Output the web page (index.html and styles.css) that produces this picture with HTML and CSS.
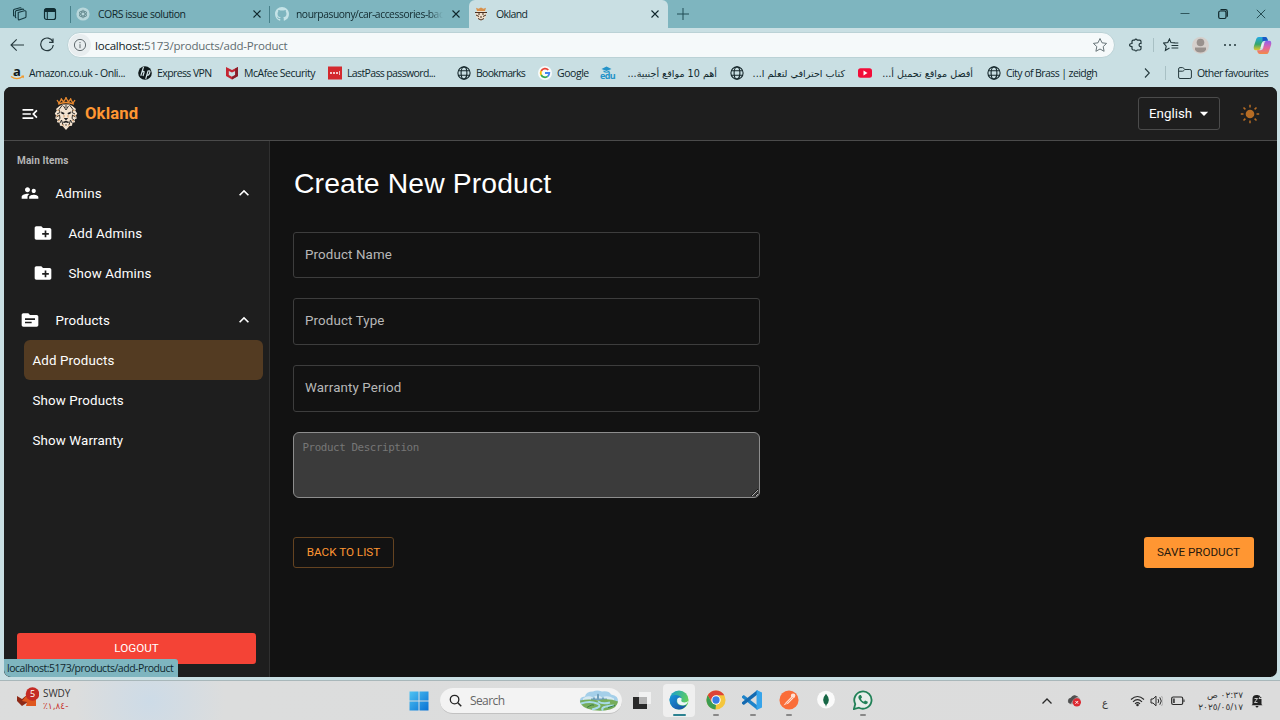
FILE: index.html
```html
<!DOCTYPE html>
<html lang="en">
<head>
<meta charset="utf-8">
<title>Okland</title>
<link rel="stylesheet" href="styles.css">
</head>
<body>
<svg class="defs" width="0" height="0">
  <symbol id="close" viewBox="0 0 10 10"><path d="M1.500 1.500l7 7M8.500 1.500l-7 7" fill="none" stroke="currentColor" stroke-width="1.100"/></symbol>
  <symbol id="globe" viewBox="0 0 14 14"><g fill="none" stroke="#17292d" stroke-width="1.100"><circle cx="7" cy="7" r="6.100"/><ellipse cx="7" cy="7" rx="2.900" ry="6.100"/><path d="M1.500 4.800h11M1.500 9.200h11"/></g></symbol>
  <symbol id="folderplus" viewBox="0 0 24 24"><path fill="#fff" d="M20 6h-8l-2-2H4c-1.100 0-2 .9-2 2v12c0 1.100.9 2 2 2h16c1.100 0 2-.9 2-2V8c0-1.100-.9-2-2-2zm-1 8h-3v3h-2v-3h-3v-2h3V9h2v3h3v2z"/></symbol>
  <symbol id="less" viewBox="0 0 24 24"><path fill="#fff" d="M12 8l-6 6 1.410 1.410L12 10.830l4.590 4.580L18 14z"/></symbol>
  <symbol id="lion" viewBox="0 0 26 34">
    <g fill="none" stroke="#e8892f" stroke-width="1.300"><path d="M5 7.200Q13 3.800 21 7.200M4 3l2 3 2.500-3.800L10.500 5 13 1l2.500 4 2-2.800L20 6l2-3"/></g>
    <g fill="#e8892f"><circle cx="13" cy="1.200" r="1"/><circle cx="8.300" cy="2" r=".8"/><circle cx="17.700" cy="2" r=".8"/></g>
    <path fill="#f3e3d0" d="M6.500 9l3-1.500h7l3 1.500 3.500 3-.8 1.500 2 3-1.200 2 .8 3-2 .7.200 3-2.500.5-.5 3-2.500.3L13 33l-3.500-4-2.500-.3-.5-3-2.500-.5.2-3-2-.7.800-3-1.200-2 2-3L3 12z"/>
    <g fill="none" stroke="#1e1e1e" stroke-width=".9"><path d="M9.500 8L6 12.500l1 3-3 1.500M16.500 8l3.500 4.500-1 3 3 1.500M3.500 20l3-2 .5 3.500-2.500 2M22.500 20l-3-2-.5 3.500 2.500 2M7 26l1.500-3L10 28M19 26l-1.500-3L16 28M10.500 9l2.500 4 2.500-4M13 8v3"/></g>
    <g fill="#1e1e1e"><path d="M8 14.500l3.500 1.500-.5 1.500-2.500-.8zM18 14.500L14.500 16l.5 1.500 2.500-.8zM10.800 21h4.400L13 23.500zM9.500 25l3.500-1.200 3.500 1.200-1.500 1-2-.5-2 .5zM12 27.500h2L13 29z"/></g>
    <g fill="none" stroke="#c98242" stroke-width=".7"><path d="M4 13l2.500 1M22 13l-2.500 1M3 18.500L6 19M23 18.500L20 19M5 24l2-1M21 24l-2-1M11 18v2.500M15 18v2.500M9 27l2 2.500M17 27l-2 2.500"/></g>
  </symbol>
</svg>

<div class="tabs">
  <div class="tools">
    <svg class="i14" viewBox="0 0 14 14" fill="none" stroke="#163940" stroke-width="1.100"><path d="M5.200 5.500l6.200-1.700q1.600-.3 1.600 1v4.700q0 1-1 1.300L6.500 12.800q-1.300.3-1.300-1zM3.400 10.800q-1 .1-1-1V5q0-1 1-1.400l6.200-1.500q1-.1 1.200.8M1.600 9q-1.100 0-1.100-1V3.500q0-1 1-1.300L7 .8q1-.2 1.200.6"/></svg>
    <svg class="i14" viewBox="0 0 14 14"><rect x="1.500" y="1.500" width="11" height="11" rx="2" fill="none" stroke="#102c32" stroke-width="1.200"/><path d="M1.500 3q0-1.500 1.500-1.500h8q1.500 0 1.500 1.500v2h-11z" fill="#102c32"/><path d="M4.300 5v7.500" stroke="#102c32"/></svg>
  </div>
  <div class="tab t1">
    <svg class="i14" viewBox="0 0 14 14"><circle cx="7" cy="7" r="6.600" fill="#b8d7db"/><g fill="none" stroke="#668b91" stroke-width=".8"><ellipse cx="7" cy="7" rx="1.900" ry="4"/><ellipse cx="7" cy="7" rx="1.900" ry="4" transform="rotate(60 7 7)"/><ellipse cx="7" cy="7" rx="1.900" ry="4" transform="rotate(120 7 7)"/></g></svg>
    <span class="name n1">CORS issue solution</span>
    <svg class="x"><use href="#close"/></svg>
  </div>
  <div class="tab t2">
    <svg class="i14" viewBox="0 0 16 16"><path fill="#c5e3e7" d="M8 0C3.580 0 0 3.580 0 8c0 3.540 2.290 6.530 5.470 7.590.4.070.55-.17.55-.38 0-.19-.01-.82-.01-1.490-2.010.37-2.530-.49-2.690-.94-.09-.23-.48-.94-.82-1.130-.28-.15-.68-.52-.01-.53.63-.01 1.080.58 1.230.82.72 1.210 1.870.87 2.330.66.070-.52.280-.87.510-1.070-1.780-.2-3.640-.89-3.640-3.950 0-.87.310-1.590.82-2.150-.08-.2-.36-1.020.08-2.120 0 0 .67-.21 2.200.82A7.600 7.600 0 018 3.860c.68 0 1.360.09 2 .27 1.530-1.040 2.200-.82 2.200-.82.440 1.100.16 1.920.08 2.120.51.560.82 1.270.82 2.150 0 3.070-1.870 3.750-3.650 3.950.29.250.54.730.54 1.480v2.200c0 .21.150.46.550.38A8 8 0 0016 8c0-4.420-3.580-8-8-8z"/></svg>
    <span class="name n2">nourpasuony/car-accessories-bac</span>
    <svg class="x"><use href="#close"/></svg>
  </div>
  <div class="tab t3">
    <svg class="i14" viewBox="0 0 14 14"><path fill="#d99049" d="M2 .8l2.500 1L7 .5l2.500 1.300 2.500-1L11 4H3z"/><path fill="#efe0cc" d="M3 4h8l1.500 2-1 5L7 13.500 2.500 11l-1-5z"/><path fill="none" stroke="#4a3021" d="M1 5.500h12M2 8l3 1.500M12 8L9 9.500M4 7h2M8 7h2M6 10h2M4 11.500l3 1.500 3-1.500"/></svg>
    <span class="name n3">Okland</span>
    <svg class="x"><use href="#close"/></svg>
  </div>
  <svg class="plus" viewBox="0 0 14 14"><path d="M7 1v12M1 7h12" stroke="#214d55" stroke-width="1"/></svg>
  <div class="win">
    <svg viewBox="0 0 12 12"><path d="M1.500 5.500h9" stroke="#30565c"/></svg>
    <svg viewBox="0 0 12 12" fill="none" stroke="#10272b" stroke-width="1.200"><rect x="1.700" y="3" width="7.300" height="7.500" rx="1.500"/><path d="M3.500 1.700h5q1.800 0 1.800 1.800v5.200"/></svg>
    <svg viewBox="0 0 12 12"><path d="M1.800 1.800l8.400 8.400M10.200 1.800l-8.400 8.400" stroke="#1c3f46" stroke-width=".9"/></svg>
  </div>
</div>

<div class="toolbar">
  <svg class="i16" viewBox="0 0 16 16"><path d="M15 8H2M7.700 2.300L2 8l5.700 5.700" fill="none" stroke="#26383d" stroke-width="1.100"/></svg>
  <svg class="i16" viewBox="0 0 16 16"><path d="M13.800 4.800A6.300 6.300 0 1 0 14.300 8M14 1.500v3.800h-3.900" fill="none" stroke="#26383d" stroke-width="1.200"/></svg>
  <div class="address">
    <span class="info"><svg viewBox="0 0 14 14" fill="none" stroke="#626c70"><circle cx="7" cy="7" r="5.600"/><path d="M7 6.200v4M7 4v1.200"/></svg></span>
    <span class="url"><b>localhost:</b>5173/products/add-Product</span>
    <svg class="star" viewBox="0 0 16 16"><path d="M8 1.500l2 4.300 4.600.6-3.400 3.200.9 4.700L8 12l-4.100 2.300.9-4.700L1.400 6.400 6 5.800z" fill="none" stroke="#687579" stroke-linejoin="round"/></svg>
  </div>
  <svg class="ext" viewBox="0 0 14 14"><path d="M3 3.500q0-1.300 1.300-1.300h1.300q1.200-2.200 2.700 0h2.300q1.400 0 1.400 1.300v2q-1.900-.3-1.900 1.500t1.900 1.500v2q0 1.500-1.400 1.500H8.300q-1.300 2-2.700 0H4.300Q3 12 3 10.500V8.700Q.6 8.500.6 7T3 5.500z" fill="none" stroke="#21363a" stroke-width="1.200"/></svg>
  <i class="vr"></i>
  <svg class="fav" viewBox="0 0 16 14"><path d="M6.500 10l-4.100 2.500.8-4.400L.5 5.100l4.300-.5L6.500 1 8 4.600l4 .3M8.500 7.500h6.800M8.500 10h6.800M10 5h5.300" fill="none" stroke="#21363a" stroke-width="1.100"/></svg>
  <svg class="avatar" viewBox="0 0 17 17"><circle cx="8.500" cy="8.500" r="8.500" fill="#d5cfcb"/><circle cx="8.500" cy="5.500" r="3.800" fill="#99918d"/><path d="M3 10.500h11v2q-1 3-5.500 3T3 12.500z" fill="#99918d"/></svg>
  <svg class="dots" viewBox="0 0 14 6"><g fill="#21363a"><circle cx="2" cy="3" r="1"/><circle cx="7" cy="3" r="1"/><circle cx="12" cy="3" r="1"/></g></svg>
  <svg class="copilot" viewBox="0 0 20 20">
    <defs><linearGradient id="c1" x2="0" y2="1"><stop stop-color="#22a9e8"/><stop offset=".55" stop-color="#35a66a"/><stop offset="1" stop-color="#e7c72c"/></linearGradient><linearGradient id="c2" x2="0" y2="1"><stop stop-color="#8d62ee"/><stop offset=".5" stop-color="#df65a7"/><stop offset="1" stop-color="#f48b45"/></linearGradient></defs>
    <path d="M6 1h7q2 0 2.700 4H12q-2 0-2.700 2.500L8 13q-.7 2-2.500 2H3q-3 0-2-4.500L3.500 3Q4.200 1 6 1z" fill="url(#c1)"/><path d="M10 1h3q2 0 2.700 4H12q-1 0-2 1z" fill="#1858c7"/>
    <path d="M14.500 5H17q3 0 2 4.500L16.500 17q-.7 2-2.500 2H7q-2 0-2.700-4H8q2 0 2.700-2.500L12 7q.7-2 2.500-2z" fill="url(#c2)"/><path d="M9.500 7h2.300l-2 6H7.800z" fill="#e5eef2"/>
  </svg>
</div>

<div class="bookmarks">
  <div><svg viewBox="0 0 14 14"><path d="M1 10.500q6 4.500 12-.2M11.500 10h2l-.5 2" stroke="#f1992c" fill="none" stroke-width="1.200"/></svg><em class="a">a</em><span class="k1">Amazon.co.uk - Onli...</span></div>
  <div><svg viewBox="0 0 14 14"><circle cx="7" cy="7" r="6.800" fill="#10191b"/><path d="M5.500 1L2.800 9.800M4 6q2.500-1.500 2 .5l-1 3.500M7.700 12.800L10 5q2.500-.8 1.800 1.500Q11 9.600 8.800 9" fill="none" stroke="#d5e6e9" stroke-width="1.200"/></svg><span class="k2">Express VPN</span></div>
  <div><svg viewBox="0 0 14 14"><path d="M1 1l6 3 6-3v9l-6 3.500L1 10z" fill="#c52632"/><path d="M3.800 5L7 6.500 10.200 5v4L7 10.800 3.800 9z" fill="#c9dfe3"/><path d="M10.200 2.400L13 1v9l-6 3.500v-2.700L10.200 9z" fill="#881f2a"/></svg><span class="k3">McAfee Security</span></div>
  <div><svg viewBox="0 0 14 14"><path fill="#d3292e" d="M0 .5h14v13H0z"/><g fill="#fff"><circle cx="3" cy="7" r="1"/><circle cx="6" cy="7" r="1"/><circle cx="9" cy="7" r="1"/><path d="M11 5h.7v4H11z"/></g></svg><span class="k4">LastPass password...</span></div>
  <div><svg><use href="#globe"/></svg><span class="k5">Bookmarks</span></div>
  <div><svg viewBox="0 0 14 14"><circle cx="7" cy="7" r="7" fill="#f8fbfb"/><g fill="none" stroke-width="1.800"><path d="M10.300 4A4.300 4.300 0 0 0 3.200 5" stroke="#e94335"/><path d="M3.200 5a4.300 4.300 0 0 0 0 4.100" stroke="#fbbc05"/><path d="M3.200 9a4.300 4.300 0 0 0 6.500 1.400" stroke="#34a853"/><path d="M7 7h4.300q0 2-1.600 3.400" stroke="#4285f4"/></g></svg><span class="k6">Google</span></div>
  <div><em class="edu">edu</em><svg viewBox="0 0 14 14"><path fill="#2493c8" d="M1.500 3L6.500.5l5 2.500-5 2zM3.500 4.500l3 1.300 3-1.300V6q-3 1.500-6 0z"/></svg><span class="ar" dir="rtl">أهم 10 مواقع أجنبية...</span></div>
  <div><svg><use href="#globe"/></svg><span class="ar r2" dir="rtl">كتاب احترافي لتعلم ا...</span></div>
  <div><svg viewBox="0 0 14 14"><rect y="2.200" width="14" height="9.600" rx="2.500" fill="#f20d39"/><path d="M5.500 4.600v4.800L9.500 7z" fill="#fff"/></svg><span class="ar r2" dir="rtl">أفضل مواقع تحميل أ...</span></div>
  <div><svg><use href="#globe"/></svg><span class="k7">City of Brass | zeidgh</span></div>
  <div><svg class="more" viewBox="0 0 8 12"><path d="M2 1.500L6.300 6 2 10.500" fill="none" stroke="#263a3e" stroke-width="1.100"/></svg><i class="vr"></i></div>
  <div><svg viewBox="0 0 14 14"><path d="M.6 3q0-1.400 1.400-1.400h2.500q.7 0 1.200.6L6.800 3.500h5q1.600 0 1.600 1.500v6q0 1.500-1.500 1.500H2Q.6 12.500.6 11zM.6 5.200h3.900q.8 0 1.300-.6l1-1.100" fill="none" stroke="#25393d"/></svg><span class="k8">Other favourites</span></div>
</div>

<main class="page">
  <header>
    <svg class="menu" viewBox="0 0 24 24"><path fill="#fff" d="M3 18h13v-2H3v2zM3 13h10v-2H3v2zm0-7v2h13V6H3zm18 9.590L17.420 12 21 8.410 19.590 7l-5 5 5 5L21 15.590z"/></svg>
    <svg class="lion"><use href="#lion"/></svg>
    <strong>Okland</strong>
    <button class="lang">English<svg viewBox="0 0 10 6"><path fill="#fff" d="M.8.800h8.400L5 5z"/></svg></button>
    <svg class="sun" viewBox="0 0 20 20"><circle cx="10" cy="10" r="4.300" fill="#b66c24"/><g stroke="#b66c24" stroke-width="1.500"><path d="M10 .8v2.700M10 16.500v2.700M.8 10h2.700M16.500 10h2.700M3.500 3.500l1.900 1.900M14.600 14.600l1.900 1.900M3.500 16.500l1.900-1.900M14.600 5.400l1.900-1.900"/></g></svg>
  </header>
  <div class="body">
    <aside>
      <h2>Main Items</h2>
      <div class="row"><svg viewBox="0 0 24 24"><path fill="#fff" d="M16.500 12c1.380 0 2.490-1.120 2.490-2.500S17.880 7 16.500 7 14 8.120 14 9.500s1.120 2.500 2.500 2.500zM9 11c1.660 0 2.990-1.340 2.990-3S10.660 5 9 5 6 6.340 6 8s1.340 3 3 3zm7.500 3c-1.830 0-5.500.92-5.500 2.750V19h11v-2.250c0-1.830-3.670-2.750-5.500-2.750zM9 13c-2.330 0-7 1.170-7 3.500V19h7v-2.250c0-.85.33-2.340 2.370-3.470C10.500 13.100 9.660 13 9 13z"/></svg><span>Admins</span><svg class="less"><use href="#less"/></svg></div>
      <div class="row sub"><svg><use href="#folderplus"/></svg><span>Add Admins</span></div>
      <div class="row sub"><svg><use href="#folderplus"/></svg><span>Show Admins</span></div>
      <div class="row products"><svg viewBox="0 0 24 24"><path fill="#fff" d="M20 6h-8l-2-2H4c-1.100 0-1.990.9-1.990 2L2 18c0 1.100.9 2 2 2h16c1.100 0 2-.9 2-2V8c0-1.100-.9-2-2-2zm-6 10H6v-2h8v2zm4-4H6v-2h12v2z"/></svg><span>Products</span><svg class="less"><use href="#less"/></svg></div>
      <div class="link active">Add Products</div>
      <div class="link">Show Products</div>
      <div class="link">Show Warranty</div>
      <button class="logout">LOGOUT</button>
    </aside>
    <section>
      <h1>Create New Product</h1>
      <div class="form">
        <div class="field">Product Name</div>
        <div class="field">Product Type</div>
        <div class="field">Warranty Period</div>
        <textarea placeholder="Product Description"></textarea>
      </div>
      <div class="actions"><button class="back">BACK TO LIST</button><button class="save">SAVE PRODUCT</button></div>
    </section>
  </div>
  <div class="status">localhost:5173/products/add-Product</div>
</main>

<footer class="taskbar">
  <div class="stock">
    <svg viewBox="0 0 22 22"><path d="M0 9l5 3 6-5v8l-6 4-5-5z" fill="#8e2a17"/><path d="M9 9h10v10H9l1-4-5-1z" fill="#df571f"/><circle cx="15.500" cy="7" r="6.800" fill="#c42b25"/><text x="15.500" y="10.300" class="five">5</text></svg>
    <div><p>SWDY</p><p class="red">٪١,٨٤-</p></div>
  </div>
  <svg class="start" viewBox="0 0 20 20"><defs><linearGradient id="w" x2="1" y2="1"><stop stop-color="#4fc3f2"/><stop offset="1" stop-color="#0871d4"/></linearGradient></defs><path fill="url(#w)" d="M.5.500h9v9h-9zM10.500.500h9v9h-9zM.5 10.500h9v9h-9zM10.500 10.500h9v9h-9z"/></svg>
  <div class="search">
    <svg class="lens" viewBox="0 0 14 14"><circle cx="6" cy="6" r="4.600" fill="none" stroke="#252525" stroke-width="1.400"/><path d="M9.500 9.500l3.700 3.700" stroke="#252525" stroke-width="1.600"/></svg>
    <span>Search</span>
    <svg class="scene" viewBox="0 0 40 22"><path fill="#a4cfe9" d="M1 13Q0 7 6 7q1-5 8-5 4-2 9 0 7-1 9 3 8 1 7 8z"/><path fill="#d5e8f2" d="M4 9q5-4 10-1 5-4 9 0 5-3 12 1v3H4z"/><path fill="#6f9fbb" d="M12 11V9h2V8h2v1h2V5l1-1 1 1v4h3V8h2v1h3v2z"/><path fill="#76ad5b" d="M1 11q10-2 18 0 10-3 20 1-1 6-8 8-12 3-23-1-7-3-7-8z"/><path fill="none" stroke="#a8dbe8" stroke-width="2" d="M2 14q9-3 16 0t-5 6M19 12q5 3 12 1M24 21q-4-4 11-5"/><path fill="none" stroke="#397e43" d="M8 18q6-4 7-2M29 18l7-2"/></svg>
  </div>
  <svg class="taskview" viewBox="0 0 20 20"><path fill="#f1f1f1" d="M7 1h12v12H7z"/><path fill="#292929" d="M1 6h14v12H1z"/><path fill="#b5b5b5" d="M7 6h8v7H7z"/></svg>
  <div class="apps">
    <div class="app on"><svg viewBox="0 0 22 22"><defs><linearGradient id="e" x2="1" y2=".4"><stop stop-color="#139ad5"/><stop offset="1" stop-color="#62d05c"/></linearGradient><linearGradient id="e2" x2="1" y2="1"><stop stop-color="#1796dc"/><stop offset="1" stop-color="#174b9b"/></linearGradient></defs><circle cx="11" cy="11" r="10.500" fill="url(#e)"/><path d="M.6 10Q2 5 8 5.500q5 .5 6 4-3-2-5 .5-2 4 2 6.500 4 2 8.500-.5-3 5.500-8.500 5.500Q1 21 .6 10z" fill="url(#e2)"/><path d="M9 10q2-3 5-.7l-.5 2.200q0 2 3.500 2.200 3 0 4.300-2-1.300 4.200-4.800 5Q10 17.300 9 13z" fill="#eef5f7"/></svg><i></i></div>
    <div class="app"><svg viewBox="0 0 22 22"><circle cx="11" cy="11" r="10.500" fill="#f5c63c"/><path d="M1.900 5.700a10.500 10.500 0 0 1 18.200 0H11L6.500 13.600z" fill="#dd4338"/><path d="M1.900 5.700l4.600 8L11 16.300l-.6 5.200A10.500 10.500 0 0 1 1.900 5.700z" fill="#3b9c52"/><circle cx="11" cy="11" r="5.200" fill="#fff"/><circle cx="11" cy="11" r="4" fill="#377de5"/></svg><i></i></div>
    <div class="app"><svg viewBox="0 0 22 22"><path fill="#1e84ca" d="M0 7l2-1.500L17 17v5L0 8.500z"/><path fill="#146ab1" d="M0 15l2 1.500L17 5V0L0 13.500z"/><path fill="#36a4ea" d="M16 0l6 2.800v16.400L16 22z"/></svg><i></i></div>
    <div class="app"><svg viewBox="0 0 22 22"><circle cx="11" cy="11" r="10.500" fill="#fa6d39"/><path d="M5 17l2-3 7-7 2 2-6 6-3 1z" fill="#ffe1d5"/><circle cx="15.500" cy="6.300" r="2.500" fill="#ffe1d5"/><path d="M7 14l1 1 7-7" stroke="#fa6d39" stroke-width=".7" fill="none"/></svg><i></i></div>
    <div class="app"><svg viewBox="0 0 22 22"><circle cx="11" cy="10.500" r="9.800" fill="#fafafa"/><path d="M11 4q6 7 .4 12.500V18h-.8v-1.500Q5 11 11 4z" fill="#176746"/></svg></div>
    <div class="app"><svg viewBox="0 0 22 22"><path d="M1 21l1.500-5.500A9.500 9.500 0 1 1 6.500 19.500z" fill="#e7eeea" stroke="#218157" stroke-width="2"/><path d="M7.500 5.500q-3.500 2 .5 6.500 5 5.500 8 2.500l.3-1.500-3-1.500-1.300 1.500Q9.500 12 8.700 9.500L10 8 8.700 5.500z" fill="#218157"/></svg><i></i></div>
  </div>
  <div class="tray">
    <svg class="up" viewBox="0 0 12 8"><path d="M1.500 6.500L6 2l4.500 4.500" fill="none" stroke="#292929" stroke-width="1.300"/></svg>
    <svg class="cloud" viewBox="0 0 16 14"><path d="M1 9Q0 5 4 4q3-5 7-1 4 1 3 6l-3 2H3z" fill="#a5a5a5"/><path d="M1.500 9.500Q0 5 4 4q3-5 8-1Q7 4 4 10.500z" fill="#505050"/><circle cx="10.500" cy="9" r="4.500" fill="#dd2931"/><path d="M9 7.500l3 3M12 7.500l-3 3" stroke="#fff"/></svg>
    <span class="ain">ع</span>
    <svg class="wifi" viewBox="0 0 15 12" fill="none" stroke="#292929" stroke-width="1.100"><path d="M1 4.500q6.500-6 13 0M3 6.800q4.500-4.300 9 0M5 8.800q2.500-2.400 5 0"/><circle cx="7.500" cy="10" r=".7" fill="#292929"/></svg>
    <svg class="vol" viewBox="0 0 13 12" fill="none" stroke="#292929"><path d="M1 4h2l3-2.800v9.600L3 8H1zM8 4q1.500 2 0 4"/><path d="M9.800 2.300q3 3.700 0 7.400" /><path d="M11.500 1q3.300 5 0 10" stroke="#aaa"/></svg>
    <svg class="bat" viewBox="0 0 14 10"><rect x=".7" y="1" width="11" height="7.500" rx="1.500" fill="none" stroke="#292929" stroke-width="1.200"/><path d="M2.200 2.500h1.500V7H2.200zM12.500 3.500h1V6h-1z" fill="#292929"/></svg>
    <div class="clock"><p>ص ٠٢:٣٧</p><p>٢٠٢٥/٠٥/١٧</p></div>
    <svg class="bell" viewBox="0 0 12 14"><path d="M1.500 10.200V5q0-4 4-4h1q4 0 4 4v5.200l1 1H.5zM4.500 12h3q-.3 1.500-1.500 1.500T4.500 12z" fill="#222"/><path d="M3.500 4.500h3l-3 4h3M7.500 1h3L8 4.500h3" fill="none" stroke="#eee" stroke-width=".8"/></svg>
  </div>
</footer>
</body>
</html>
```
FILE: styles.css
```css
* { box-sizing: border-box; }
body { margin: 0; width: 1280px; height: 720px; overflow: hidden; background: #c9dfe3; font-family: "Open Sans", "DejaVu Sans", sans-serif; color: #10282d; font-size: 10.5px; display: flex; flex-direction: column; }
svg { display: block; flex: none; }
p, h1, h2 { margin: 0; }
button { padding: 0; border: 0; font: inherit; }
.defs { display: none; }
.i14 { width: 14px; height: 14px; }
.i16 { width: 16px; height: 16px; }
.vr { width: 1px; height: 14px; background: #a8c0c4; flex: none; }

.tabs { height: 28px; flex: none; background: #7eb5bf; display: flex; align-items: center; }
.tools { width: 70px; padding-left: 13px; display: flex; gap: 16px; flex: none; }
.tab { height: 28px; display: flex; align-items: center; flex: none; padding-bottom: 1px; }
.tab .x { width: 10px; height: 10px; margin-left: auto; color: #10272c; }
.t1, .t2 { height: 17px; border-left: 1px solid #47808a; padding-left: 5px; }
.t1 { width: 199px; padding-right: 7px; }
.t2 { width: 200px; padding-right: 8px; }
.t3 { width: 199px; background: #c9dfe3; border-radius: 6px 6px 0 0; padding: 0 8px 1px 5px; }
.name { margin-left: 8px; white-space: nowrap; line-height: 16px; }
.n1 { letter-spacing: -.5px; }
.n2 { margin-left: 7px; font-size: 10.3px; letter-spacing: -.44px; background: linear-gradient(90deg, #10282d 90%, #7eb5bf); -webkit-background-clip: text; background-clip: text; color: transparent; }
.n3 { letter-spacing: -.6px; }
.plus { width: 14px; height: 14px; margin-left: 8px; }
.win { margin-left: auto; display: flex; gap: 26px; padding: 0 13px 0 0; }
.win svg { width: 12px; height: 12px; }

.toolbar { height: 34px; flex: none; display: flex; align-items: center; padding: 0 8px 0 9px; }
.toolbar .i16 + .i16 { margin-left: 14px; }
.address { width: 1048px; height: 26px; margin-left: 12px; border: 1px solid #bbd2d6; border-radius: 13px; background: #f5f9fa; display: flex; align-items: center; flex: none; padding: 0 6px 0 1px; }
.info { width: 22px; height: 22px; border-radius: 50%; background: #e8edef; padding: 4px; }
.info svg { width: 14px; height: 14px; }
.url { font-size: 11.5px; margin-left: 4px; color: #5f6c70; letter-spacing: -.22px; white-space: nowrap; }
.url b { font-weight: 400; color: #101b1e; }
.star { width: 16px; height: 16px; margin-left: auto; }
.ext { width: 14px; height: 14px; margin-left: 14px; }
.toolbar .vr { margin-left: 10px; }
.fav { width: 16px; height: 14px; margin-left: 9px; }
.avatar { width: 17px; height: 17px; margin-left: 13px; }
.dots { width: 14px; height: 6px; margin-left: 14px; }
.copilot { width: 19px; height: 19px; margin-left: 15.500px; }

.bookmarks { height: 25px; flex: none; padding: 0 0 3px 10px; display: grid; grid-template-columns: 128px 87px 103px 129px 81px 62px 130px 128px 129px 156px 35px 92px; align-items: center; }
.bookmarks div { display: flex; align-items: center; position: relative; height: 20px; }
.bookmarks svg { width: 14px; height: 14px; }
.bookmarks span { margin-left: 5px; white-space: nowrap; }
.bookmarks .more { width: 8px; height: 12px; }
.bookmarks .vr { margin-left: 14px; }
.bookmarks em { position: absolute; font-style: normal; font-weight: 700; }
.bookmarks .a { left: 3px; top: 0; font-size: 13px; line-height: 16px; color: #10191b; }
.bookmarks .edu { left: 0; top: 6px; font-size: 9px; line-height: 14px; letter-spacing: -.6px; color: #2493c8; }
.k1 { letter-spacing: -.44px; }
.k2 { letter-spacing: -.6px; }
.k3 { letter-spacing: -.48px; }
.k4 { letter-spacing: -.63px; }
.k5 { letter-spacing: -.7px; }
.k6 { letter-spacing: -.45px; }
.k7 { letter-spacing: -.57px; }
.k8 { letter-spacing: -.57px; }
.bookmarks .ar { width: 103px; font-family: "DejaVu Sans", sans-serif; font-size: 9.6px; margin-left: 0; text-align: right; }
.bookmarks .r2 { width: 101px; }

.page { position: relative; width: 1273px; height: 590px; margin-left: 4px; border-radius: 7px; overflow: hidden; background: #121212; color: #fff; font-family: Roboto, sans-serif; font-size: 13.33px; letter-spacing: .125px; display: flex; flex-direction: column; flex: none; }
header { height: 54px; flex: none; border-bottom: 1px solid #4b4b4b; background: #1e1e1e; display: flex; align-items: center; padding: 0 17px 0 16px; }
.menu { width: 20px; height: 20px; }
.lion { width: 26px; height: 34px; margin-left: 13px; }
header strong { margin-left: 6px; color: #ff9632; font-size: 16.67px; font-weight: 700; }
.lang { width: 82px; height: 33px; margin-left: auto; border: 1px solid #4b4b4b; border-radius: 3px; background: transparent; color: #fff; display: flex; align-items: center; padding-left: 10px; }
.lang svg { width: 10px; height: 6px; margin-left: 7px; }
.sun { width: 20px; height: 20px; margin-left: 20px; }
.body { display: flex; flex: 1; min-height: 0; }
aside { width: 266px; flex: none; background: #1e1e1e; border-right: 1px solid #303030; display: flex; flex-direction: column; }
aside h2 { height: 32px; padding: 11px 0 0 13px; font-size: 10px; line-height: 18px; font-weight: 700; color: #b5b5b5; }
.row { height: 40px; flex: none; display: flex; align-items: center; padding: 0 15.500px; }
.row svg { width: 20px; height: 20px; }
.row span { margin-left: 16px; }
.row .less { margin-left: auto; }
.sub { padding-left: 28.500px; }
.products { margin-top: 7px; }
.link { height: 40px; flex: none; margin: 0 6px 0 19.500px; padding-left: 9px; line-height: 41px; border-radius: 6px; }
.active { background: #533b22; }
.logout { height: 31px; margin: auto 13px 13px; padding-bottom: 2px; border-radius: 3px; background: #f44336; color: #fff; font-size: 11.67px; letter-spacing: 0; }
section { flex: 1; padding: 24px 23.5px 0 23px; }
h1 { padding-left: 1px; font: 400 28.33px/36px "Liberation Sans", Arial, sans-serif; letter-spacing: .12px; }
.form { width: 467px; margin-top: 30.500px; display: grid; gap: 20px; grid-template-rows: 46.700px 46.700px 46.700px 66.500px; }
.field { border: 1px solid #3d3d3d; border-radius: 3px; padding: 0 11px; line-height: 44px; color: #b8b8b8; }
textarea { width: 467px; height: 66.500px; border: 1px solid #8d8d8d; border-radius: 6px; background: #3b3b3b; padding: 8.500px 8px 8px 8.500px; font: 10.83px/14px "DejaVu Sans Mono", monospace; letter-spacing: -.4px; color: #fff; }
textarea::placeholder { color: #767676; }
.actions { display: flex; justify-content: space-between; margin-top: 39px; font-size: 11.67px; }
.actions button { height: 31px; padding-bottom: 1.500px; border-radius: 3px; letter-spacing: 0; }
.actions .back { width: 101px; border: 1px solid #644321; background: transparent; color: #ff9632; }
.save { width: 110px; background: #ff9632; color: #27190d; }
.status { position: absolute; left: -1px; bottom: 0; width: 175px; height: 18px; padding-left: 4px; border-radius: 0 3px 0 0; background: #7eb5bf; color: #10282d; font: 10.500px/18px "Open Sans", sans-serif; letter-spacing: -.47px; white-space: nowrap; }

.taskbar { height: 40px; margin-top: 3px; flex: none; border-top: 1px solid #a8b7ba; background: radial-gradient(circle at 150px 20px, #cddbe7 0, #dcdddd 75px, #dcdcdc); display: flex; align-items: center; color: #333; }
.stock { width: 408.500px; display: flex; padding-left: 17px; font-size: 10px; align-items: center; flex: none; }
.stock svg { width: 22px; height: 22px; margin-top: -6px; }
.stock div { margin-left: 4px; margin-top: -1px; }
.stock p { line-height: 13px; letter-spacing: -.1px; }
.stock .red { color: #c83831; font-family: "DejaVu Sans", sans-serif; font-size: 9px; letter-spacing: -.3px; direction: ltr; unicode-bidi: bidi-override; }
.five { font: 9px "Open Sans", sans-serif; fill: #fff; text-anchor: middle; }
.start { width: 20px; height: 20px; }
.search { width: 182px; height: 26px; margin-left: 11.500px; border-radius: 13px; border-bottom: 1px solid #c2c2c2; background: #f3f3f3; display: flex; align-items: center; padding: 0 3px 0 9px; font-size: 12px; color: #666; flex: none; }
.lens { width: 13px; height: 13px; }
.search span { margin-left: 8px; letter-spacing: -.6px; }
.scene { width: 40px; height: 23px; margin-left: auto; }
.taskview { width: 20px; height: 20px; margin-left: 10px; }
.apps { display: grid; grid-template-columns: repeat(6, 36.800px); margin-left: 8.500px; }
.app { position: relative; height: 33px; display: flex; justify-content: center; padding-top: 6px; }
.app svg { width: 20px; height: 20px; }
.app i { position: absolute; left: 15.500px; bottom: 1px; width: 6px; height: 2px; border-radius: 1px; background: #888; }
.on { width: 32px; margin-left: 2.900px; border-radius: 4px; background: #efefef; }
.app.on i { left: 10px; width: 13px; background: #2d8291; }
.tray { margin-left: auto; padding-right: 17px; display: flex; align-items: center; }
.up { width: 12px; height: 8px; }
.cloud { width: 15px; height: 13px; margin-left: 14px; }
.ain { width: 8px; margin-left: 20px; padding-top: 3px; font: 10px "DejaVu Sans", sans-serif; }
.wifi { width: 15px; height: 12px; margin-left: 20px; }
.vol { width: 13px; height: 12px; margin-left: 5px; }
.bat { width: 14px; height: 10px; margin-left: 8px; }
.clock { width: 46px; margin-left: 12px; text-align: right; font: 9px/12px "DejaVu Sans", sans-serif; direction: ltr; white-space: nowrap; }
.clock p { unicode-bidi: bidi-override; direction: ltr; }
.bell { width: 12px; height: 14px; margin-left: 8px; }
```
